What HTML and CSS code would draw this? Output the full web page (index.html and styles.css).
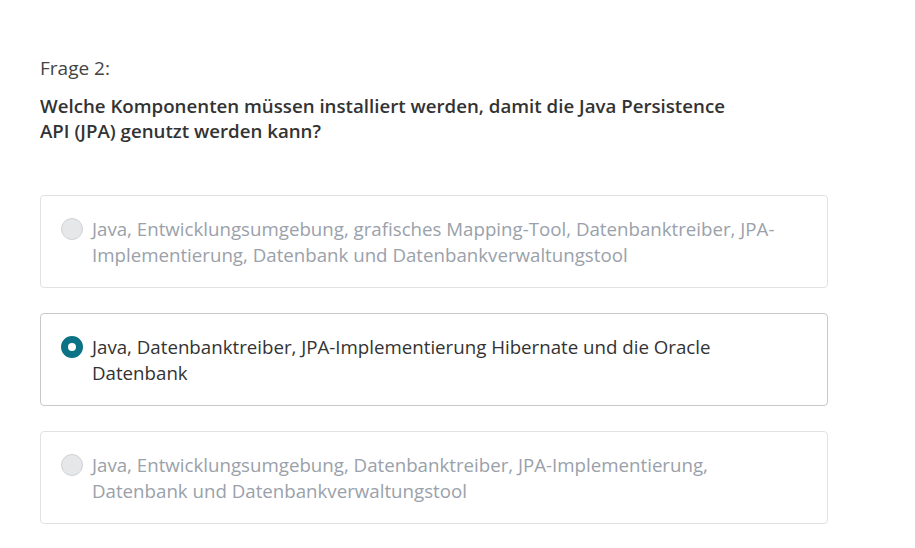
FILE: index.html
```html
<!DOCTYPE html>
<html lang="de">
<head>
<meta charset="utf-8">
<link rel="stylesheet" href="styles.css">
</head>
<body>
<main class="quiz">
  <p class="label">Frage 2:</p>
  <h2 class="question">Welche Komponenten müssen installiert werden, damit die Java Persistence API (JPA) genutzt werden kann?</h2>
  <div class="options">
    <div class="option disabled">
      <span class="radio"></span>
      <span class="text">Java, Entwicklungsumgebung, grafisches Mapping-Tool, Datenbanktreiber, JPA-Implementierung, Datenbank und Datenbankverwaltungstool</span>
    </div>
    <div class="option selected">
      <span class="radio"></span>
      <span class="text">Java, Datenbanktreiber, JPA-Implementierung Hibernate und die Oracle Datenbank</span>
    </div>
    <div class="option disabled">
      <span class="radio"></span>
      <span class="text">Java, Entwicklungsumgebung, Datenbanktreiber, JPA-Implementierung, Datenbank und Datenbankverwaltungstool</span>
    </div>
  </div>
</main>
</body>
</html>
```
FILE: styles.css
```css
* { box-sizing: border-box; }
html, body { margin: 0; padding: 0; background: #fff; }
body {
  font-family: "Open Sans", "Noto Sans", sans-serif;
  color: #333;
}
.quiz {
  padding: 55px 0 0 40px;
  width: 828px;
}
.label {
  margin: 0;
  font-size: 19px;
  line-height: 26px;
  color: #444;
}
.question {
  margin: 12px 0 0 0;
  font-size: 18.7px;
  line-height: 25px;
  font-weight: 600;
  color: #333;
  max-width: 715px;
}
.options {
  margin-top: 52px;
  display: flex;
  flex-direction: column;
  gap: 25px;
}
.option {
  display: flex;
  align-items: flex-start;
  gap: 9px;
  border: 1px solid #dcdcdc;
  border-radius: 4px;
  padding: 20px 40px 19px 20px;
  font-size: 18.7px;
  line-height: 26px;
}
.option.selected { border-color: #c8c8c8; color: #333; }
.option.disabled { color: #9aa1aa; border-color: #e2e2e2; }
.radio {
  flex: none;
  width: 22px;
  height: 22px;
  border-radius: 50%;
  margin-top: 2px;
  background: #e6e7e9;
  border: 1px solid #cfd2d5;
}
.selected .radio {
  background: #fff;
  border: 7px solid #0b7385;
}
```
